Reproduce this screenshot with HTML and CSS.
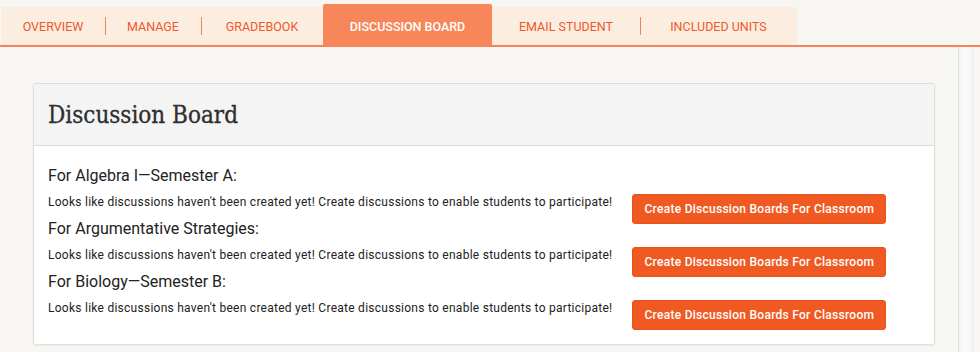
FILE: index.html
```html
<!DOCTYPE html>
<html lang="en">
<head>
  <meta charset="UTF-8" />
  <title>Discussion Board</title>
  <link rel="stylesheet" href="styles.css">
</head>
<body>
  <nav class="tabs">
    <a class="tab tab-overview">OVERVIEW</a>
    <a class="tab tab-manage sep">MANAGE</a>
    <a class="tab tab-gradebook sep">GRADEBOOK</a>
    <a class="tab tab-discussion active">DISCUSSION BOARD</a>
    <a class="tab tab-email">EMAIL STUDENT</a>
    <a class="tab tab-units sep">INCLUDED UNITS</a>
  </nav>

  <div class="scroll-track"></div>

  <main class="content">
    <section class="panel">
      <div class="panel-head">
        <h2 class="panel-title">Discussion Board</h2>
      </div>
      <div class="panel-body">
        <div class="course">
          <h4 class="course-name">For Algebra I—Semester A:</h4>
          <p class="course-note">Looks like discussions haven't been created yet! Create discussions to enable students to participate!</p>
          <button class="btn-create">Create Discussion Boards For Classroom</button>
        </div>
        <div class="course">
          <h4 class="course-name">For Argumentative Strategies:</h4>
          <p class="course-note">Looks like discussions haven't been created yet! Create discussions to enable students to participate!</p>
          <button class="btn-create">Create Discussion Boards For Classroom</button>
        </div>
        <div class="course">
          <h4 class="course-name">For Biology—Semester B:</h4>
          <p class="course-note">Looks like discussions haven't been created yet! Create discussions to enable students to participate!</p>
          <button class="btn-create">Create Discussion Boards For Classroom</button>
        </div>
      </div>
    </section>
  </main>
</body>
</html>
```

FILE: styles.css
```css
* {
  box-sizing: border-box;
}
html, body {
  margin: 0;
  padding: 0;
  font-family: Roboto, 'Liberation Sans', sans-serif;
  background: #f8f6f2;
  color: #222;
  overflow: hidden;
}
body {
  position: relative;
  height: 352px;
}

.tabs {
  display: flex;
  align-items: flex-end;
  padding: 4px 0 0 1px;
  border-bottom: 2px solid #f5845a;
}

.tab {
  position: relative;
  display: flex;
  align-items: center;
  justify-content: center;
  height: 38px;
  padding-top: 1px;
  background: #fbeee1;
  color: #f0582a;
  font-size: 12.5px;
  text-decoration: none;
}

.tab-overview { width: 104px; }
.tab-manage { width: 96px; }
.tab-gradebook { width: 122px; }
.tab-discussion { width: 169px; }
.tab-email { width: 148px; }
.tab-units { width: 157px; }

.tab.sep::before {
  content: "";
  position: absolute;
  left: 0;
  top: 10px;
  height: 18px;
  border-left: 1px solid #f0825c;
}

.tab.active {
  height: 41px;
  padding-top: 4px;
  background: #f7865a;
  color: #fff;
  font-weight: 500;
  border-radius: 2px 2px 0 0;
}

.scroll-track {
  position: absolute;
  left: 958px;
  top: 47px;
  width: 15px;
  bottom: 0;
  background: linear-gradient(to right, #f1f1f1, #fbfbfb 40%, #f6f6f6);
  border-left: 1px solid #e3e3e3;
  border-right: 1px solid #ececec;
}

.content {
  padding: 36px 45px 0 33px;
}

.panel {
  background: #fff;
  border: 1px solid #dedede;
  border-radius: 3px;
  box-shadow: 0 1px 2px rgba(0, 0, 0, 0.06);
}

.panel-head {
  display: flex;
  align-items: center;
  height: 62px;
  padding: 0 14px;
  background: #f4f4f4;
  border-bottom: 1px solid #dcdcdc;
  border-radius: 3px 3px 0 0;
}

.panel-title {
  margin: 0;
  font-family: 'DejaVu Serif Condensed', 'DejaVu Serif', serif;
  font-size: 24px;
  font-weight: normal;
  color: #2e2e2e;
  -webkit-text-stroke: 0.3px #2e2e2e;
}

.panel-body {
  padding: 20px 14px 19px;
}

.course {
  display: grid;
  grid-template-columns: max-content max-content;
  grid-template-rows: 20px 25px;
  row-gap: 8px;
  column-gap: 20px;
}

.course-name {
  grid-column: 1 / 3;
  margin: 0;
  font-size: 16px;
  font-weight: normal;
  line-height: 20px;
  color: #222;
}

.course-note {
  margin: 0;
  font-size: 12px;
  line-height: 17px;
  letter-spacing: 0.26px;
}

.btn-create {
  height: 30px;
  padding: 0 11px;
  background: #f05a22;
  color: #fff;
  border: 1px solid #e8531c;
  border-radius: 3px;
  font-family: Roboto, 'Liberation Sans', sans-serif;
  font-size: 12px;
  font-weight: 500;
  letter-spacing: 0.27px;
  cursor: pointer;
}
```
